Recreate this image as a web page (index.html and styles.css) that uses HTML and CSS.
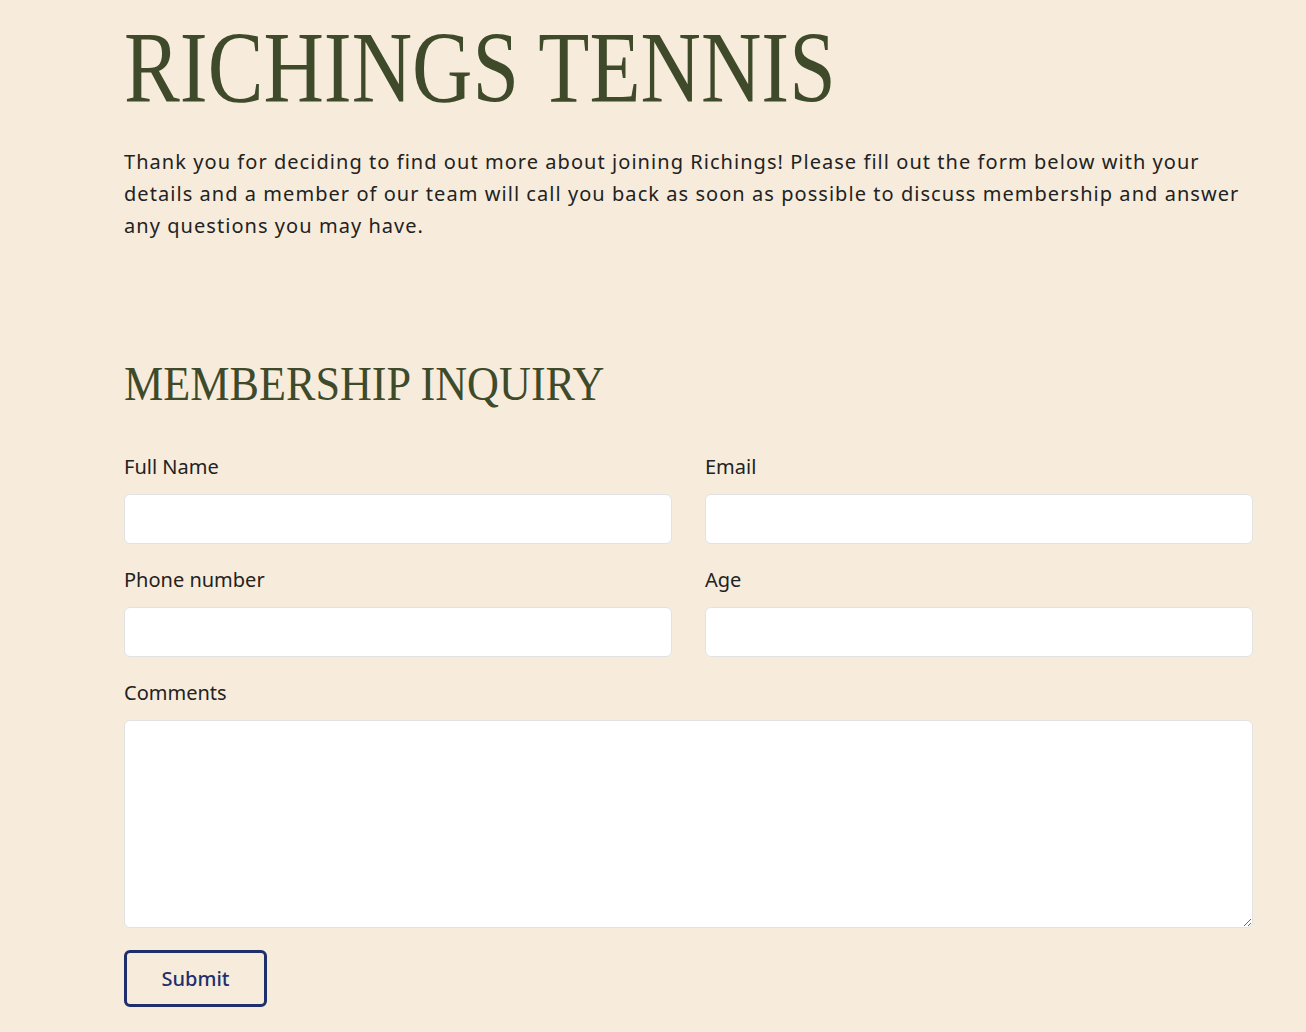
FILE: index.html
```html
<!DOCTYPE html>
<html>
<head>
<meta charset="utf-8">
<link rel="stylesheet" href="styles.css">
</head>
<body>
<main class="page">
  <h1 class="title"><span class="title-text">RICHINGS TENNIS</span></h1>
  <p class="intro">Thank you for deciding to find out more about joining Richings! Please fill out the form below with your details and a member of our team will call you back as soon as possible to discuss membership and answer any questions you may have.</p>
  <h2 class="section-title"><span class="section-text">MEMBERSHIP INQUIRY</span></h2>
  <form class="form">
    <div class="field">
      <label class="label">Full Name</label>
      <input class="input" type="text">
    </div>
    <div class="field">
      <label class="label">Email</label>
      <input class="input" type="text">
    </div>
    <div class="field">
      <label class="label">Phone number</label>
      <input class="input" type="text">
    </div>
    <div class="field">
      <label class="label">Age</label>
      <input class="input" type="text">
    </div>
    <div class="field full">
      <label class="label">Comments</label>
      <textarea class="textarea"></textarea>
    </div>
    <div class="actions">
      <button class="submit" type="button">Submit</button>
    </div>
  </form>
</main>
</body>
</html>
```
FILE: styles.css
```css
html, body {
  margin: 0;
  padding: 0;
  background: #f7ecdb;
}
body {
  font-family: "Noto Sans", "Liberation Sans", sans-serif;
  color: #222222;
}
.page {
  width: 1130px;
  margin-left: 124px;
  padding-top: 18px;
}
.title {
  margin: 0;
  font-family: "Liberation Serif", serif;
  font-weight: 400;
  font-size: 101px;
  line-height: 100px;
  color: #3f4a2a;
  white-space: nowrap;
}
.title-text {
  display: inline-block;
  transform: scaleX(0.828);
  transform-origin: left center;
}
.intro {
  margin: 28px 0 0 0;
  font-size: 20px;
  line-height: 32px;
  letter-spacing: 1.05px;
  width: 1125px;
}
.section-title {
  margin: 114px 0 0 0;
  font-family: "Liberation Serif", serif;
  font-weight: 400;
  font-size: 48px;
  line-height: 56px;
  color: #3f4a2a;
  white-space: nowrap;
}
.section-text {
  display: inline-block;
  transform: scaleX(0.92);
  transform-origin: left center;
}
.form {
  margin-top: 42px;
  display: grid;
  grid-template-columns: 548px 548px;
  column-gap: 33px;
  row-gap: 23px;
}
.field {
  display: flex;
  flex-direction: column;
  gap: 14px;
}
.field.full {
  grid-column: 1 / span 2;
}
.label {
  font-size: 20px;
  line-height: 26px;
}
.input, .textarea {
  box-sizing: border-box;
  width: 100%;
  background: #ffffff;
  border: 1px solid #e2e2e4;
  border-radius: 6px;
  margin: 0;
  font-family: inherit;
}
.input {
  height: 50px;
}
.textarea {
  height: 208px;
  resize: vertical;
}
.actions {
  grid-column: 1 / span 2;
  margin-top: -1px;
}
.submit {
  width: 143px;
  height: 57px;
  background: transparent;
  border: 3px solid #1f2f6b;
  border-radius: 6px;
  color: #1f2f6b;
  font-family: inherit;
  font-size: 20px;
  font-weight: 500;
  padding: 0;
}
```
